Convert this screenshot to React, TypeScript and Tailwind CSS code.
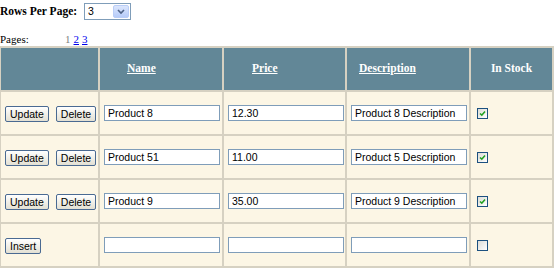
import React from 'react';

interface Product {
  name: string;
  price: string;
  description: string;
  inStock: boolean;
}

const products: Product[] = [
  { name: 'Product 8', price: '12.30', description: 'Product 8 Description', inStock: true },
  { name: 'Product 51', price: '11.00', description: 'Product 5 Description', inStock: true },
  { name: 'Product 9', price: '35.00', description: 'Product 9 Description', inStock: true },
];

const XpButton: React.FC<{ label: string }> = ({ label }) => (
  <button className="h-[16px] px-[4px] rounded-[2px] border border-[#4a6a92] bg-gradient-to-b from-white to-[#e3e0d3] text-[10.5px] leading-none text-black font-['Liberation_Sans',sans-serif]">
    {label}
  </button>
);

const TextBox: React.FC<{ value: string }> = ({ value }) => (
  <input
    readOnly
    value={value}
    className="block w-[116px] h-[16px] px-[3px] border border-[#7f9db9] bg-white text-[10.5px] text-black font-['Liberation_Sans',sans-serif] outline-none"
  />
);

const CheckBox: React.FC<{ checked: boolean }> = ({ checked }) => (
  <span className="inline-flex w-[11px] h-[11px] items-center justify-center border border-[#1c5180] bg-gradient-to-br from-[#dcdcd7] to-white">
    {checked && (
      <svg width="7" height="7" viewBox="0 0 7 7">
        <path d="M1 3.5 L2.8 5.2 L6 1.5" stroke="#21a121" strokeWidth="1.6" fill="none" />
      </svg>
    )}
  </span>
);

const cell = 'border-2 border-[#d6d1c2] px-[4px]';

const App: React.FC = () => {
  return (
    <div className="w-[556px] h-[274px] bg-white font-['Liberation_Serif',serif] text-black overflow-hidden">
      <div className="flex items-center h-[23px]">
        <span className="text-[11.5px] font-bold w-[84px] shrink-0 whitespace-nowrap">Rows Per Page:</span>
        <div className="flex h-[17px] w-[47px] border border-[#7f9db9] bg-white">
          <span className="flex-1 pl-[3px] text-[10.5px] leading-[15px] font-['Liberation_Sans',sans-serif]">3</span>
          <span className="w-[16px] m-[1px] flex items-center justify-center rounded-[2px] bg-gradient-to-b from-[#dbe6fd] to-[#b6cbf8] border border-[#b9cdf7]">
            <svg width="8" height="6" viewBox="0 0 8 6">
              <path d="M1 1 L4 4 L7 1" stroke="#4d6185" strokeWidth="1.6" fill="none" />
            </svg>
          </span>
        </div>
      </div>
      <div className="flex items-center h-[23px] text-[11px] whitespace-nowrap pt-[9px]">
        <span className="w-[65px] shrink-0">Pages:</span>
        <span className="text-[#808080]">1</span>
        <a className="ml-[3px] text-[#0000ee] underline">2</a>
        <a className="ml-[3px] text-[#0000ee] underline">3</a>
      </div>
      <table className="table-fixed border-collapse w-[553px] -ml-[1px]">
        <colgroup>
          <col className="w-[99px]" />
          <col className="w-[124px]" />
          <col className="w-[123px]" />
          <col className="w-[124px]" />
          <col className="w-[83px]" />
        </colgroup>
        <thead>
          <tr className="h-[44px] bg-[#628797] text-white text-[11.5px]">
            <th className={cell}></th>
            <th className={`${cell} text-left pl-[27px]`}>
              <a className="underline">Name</a>
            </th>
            <th className={`${cell} text-left pl-[28px]`}>
              <a className="underline">Price</a>
            </th>
            <th className={`${cell} text-left pl-[12px]`}>
              <a className="underline">Description</a>
            </th>
            <th className={`${cell} text-center`}>In Stock</th>
          </tr>
        </thead>
        <tbody className="bg-[#fcf6e5]">
          {products.map((p) => (
            <tr key={p.name} className="h-[44px]">
              <td className={cell}>
                <div className="flex gap-[7px] pt-[2px]">
                  <XpButton label="Update" />
                  <XpButton label="Delete" />
                </div>
              </td>
              <td className={cell}><TextBox value={p.name} /></td>
              <td className={cell}><TextBox value={p.price} /></td>
              <td className={cell}><TextBox value={p.description} /></td>
              <td className={`${cell} pl-[6px]`}><div className="flex pt-[1px]"><CheckBox checked={p.inStock} /></div></td>
            </tr>
          ))}
          <tr className="h-[44px]">
            <td className={cell}>
              <div className="flex pt-[2px]">
                <XpButton label="Insert" />
              </div>
            </td>
            <td className={cell}><TextBox value="" /></td>
            <td className={cell}><TextBox value="" /></td>
            <td className={cell}><TextBox value="" /></td>
            <td className={`${cell} pl-[6px]`}><div className="flex pt-[1px]"><CheckBox checked={false} /></div></td>
          </tr>
        </tbody>
      </table>
    </div>
  );
};

export default App;
